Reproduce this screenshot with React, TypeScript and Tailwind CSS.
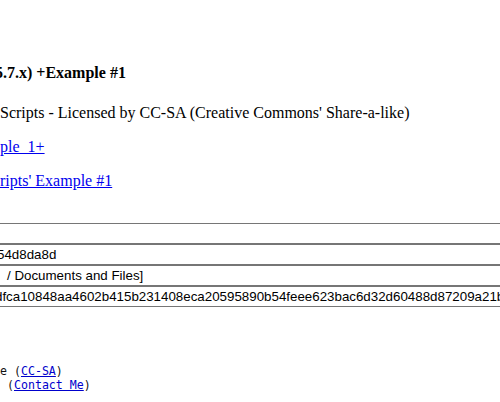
const serif = { fontFamily: '"Liberation Serif", "Times New Roman", serif' };

const rows = [
  { text: '', shift: 'ml-0' },
  { text: '54d8da8d', shift: '-ml-[4px]' },
  { text: '/ Documents and Files]', shift: 'ml-[6px]' },
  {
    text: 'dfca10848aa4602b415b231408eca20595890b54feee623bac6d32d60488d87209a21b5c03e7f1',
    shift: '-ml-[6px]',
  },
];

export default function App() {
  return (
    <div className="w-[500px] h-[402px] overflow-hidden bg-white text-black">
      <div className="pt-[64px] whitespace-nowrap" style={serif}>
        <h4 className="-ml-[5px] text-[16px] font-bold leading-[18px]">5.7.x) +Example #1</h4>
        <p className="mt-[22px] text-[16px] leading-[18px]">
          Scripts - Licensed by CC-SA (Creative Commons' Share-a-like)
        </p>
        <p className="mt-[16px] text-[16px] leading-[18px]">
          <a href="#" className="text-[#0000ee] underline">ple_1+</a>
        </p>
        <p className="mt-[16px] text-[16px] leading-[18px]">
          <a href="#" className="text-[#0000ee] underline">ripts' Example #1</a>
        </p>
      </div>

      <div className="mt-[33px] -ml-[20px] w-[560px] flex flex-col">
        {rows.map((r, i) => (
          <div
            key={i}
            className="h-[21px] border border-[#767676] flex items-center overflow-hidden whitespace-nowrap pl-[20px] text-[13.33px] leading-[15px]"
            style={{ fontFamily: '"Liberation Sans", Arial, sans-serif' }}
          >
            <span className={r.shift}>{r.text}</span>
          </div>
        ))}
      </div>

      <div
        className="mt-[57px] text-[11.6px] leading-[14px] whitespace-pre text-[#111]"
        style={{ fontFamily: '"DejaVu Sans Mono", Consolas, monospace' }}
      >
        <div>
          e (<a href="#" className="text-[#0000cc] underline">CC-SA</a>)
        </div>
        <div>
          {' '}(<a href="#" className="text-[#0000cc] underline">Contact Me</a>)
        </div>
      </div>
    </div>
  );
}
